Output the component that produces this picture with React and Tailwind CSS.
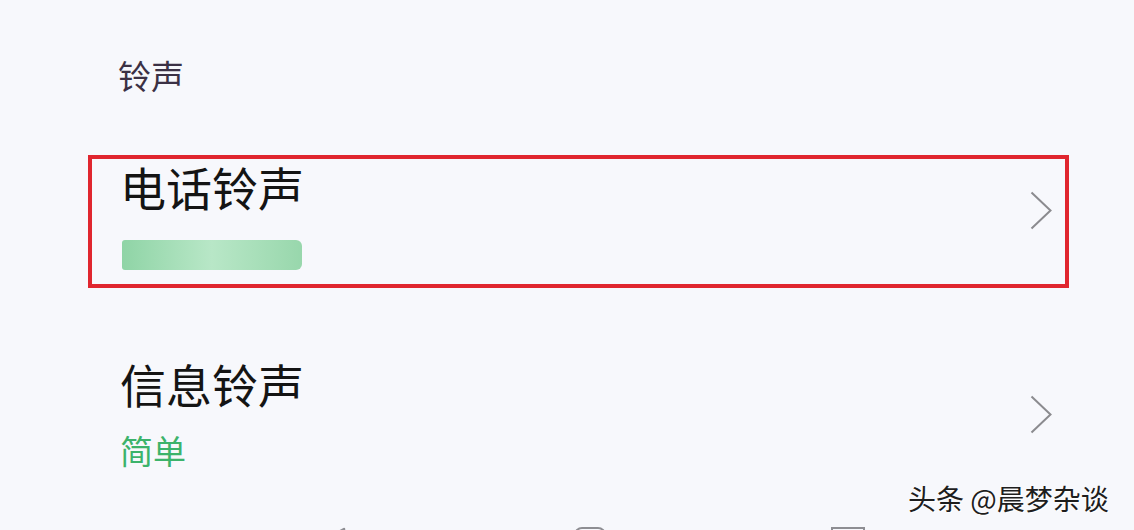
import React from "react"

const cjk = { fontFamily: '"Noto Sans CJK SC", "Noto Sans", sans-serif' }

function Chevron() {
    return (
        <svg width="23" height="39" viewBox="0 0 23 39" fill="none" className="shrink-0">
            <polyline points="1.5,1.5 20.5,19.5 1.5,37.5" stroke="#8b8b8f" strokeWidth="2" strokeLinejoin="miter" />
        </svg>
    )
}

export default function App() {
    return (
        <div className="relative h-[530px] w-[1134px] overflow-hidden bg-[#f7f8fc] flex flex-col" style={cjk}>

            {/* section label */}
            <div className="pt-[59px] pl-[118px] text-[33px] leading-none text-[#3b3145]">铃声</div>

            {/* phone ringtone, highlighted */}
            <div className="mt-[63px] ml-[88px] w-[981px] border-4 border-[#e0262f] pl-[28px] pr-[12px] pt-[4px] pb-[14px] flex items-center justify-between">
                <div className="flex flex-col">
                    <div className="text-[46px] leading-none text-[#141414]">电话铃声</div>
                    <div className="mt-[31px] ml-[2px] h-[30px] w-[180px] rounded-l-[3px] rounded-r-[6px] bg-linear-to-r from-[#8fd4a6] via-[#b8e7c7] to-[#98d7ac]" />
                </div>
                <div className="mb-[12px]">
                    <Chevron />
                </div>
            </div>

            {/* message ringtone */}
            <div className="mt-[68px] ml-[88px] w-[981px] border-4 border-transparent pl-[28px] pr-[12px] flex items-center justify-between">
                <div className="flex flex-col">
                    <div className="text-[46px] leading-none text-[#141414]">信息铃声</div>
                    <div className="mt-[28px] text-[33px] leading-none text-[#3cb36b]">简单</div>
                </div>
                <div className="mt-[2px]">
                    <Chevron />
                </div>
            </div>

            {/* nav bar, mostly cut off */}
            <div className="mt-auto mb-[-27px] h-[30px] flex items-start">
                <svg width="30" height="30" viewBox="0 0 30 30" fill="none" className="ml-[318px]">
                    <path d="M26 2 L3 15 L26 28 Z" stroke="#8e8e93" strokeWidth="2.5" strokeLinejoin="round" />
                </svg>
                <div className="ml-[226px] h-[32px] w-[32px] rounded-[8px] border-[2.5px] border-[#8e8e93]" />
                <div className="ml-[225px] h-[34px] w-[34px] border-[2.5px] border-[#8e8e93]" />
            </div>

            {/* watermark */}
            <div className="absolute left-[908px] top-[484px] text-[28px] leading-none text-[#1e1e1e] [text-shadow:1px_1px_0_#ffffff,-1px_0_0_#ffffff]">
                头条 @晨梦杂谈
            </div>
        </div>
    )
}
